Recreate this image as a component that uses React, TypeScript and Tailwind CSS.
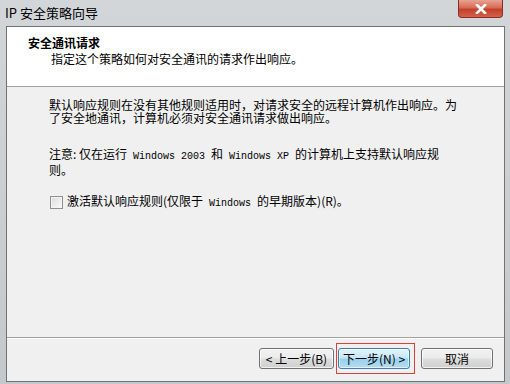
import React from "react";

const cjk = { fontFamily: '"Noto Sans CJK SC", "Noto Sans", sans-serif' };
const mono = "font-['Liberation_Mono',monospace] text-[10px] whitespace-pre";

function Btn({
  children,
  primary,
  className = "",
}: {
  children: React.ReactNode;
  primary?: boolean;
  className?: string;
}) {
  return (
    <div
      className={
        "relative h-[21px] flex items-center justify-center rounded-[3px] border text-[12px] text-black " +
        (primary
          ? "border-[#3c7fb1] bg-[linear-gradient(to_bottom,#e5f4fc_0%,#c4e5f6_48%,#98d1ef_52%,#b6dcf0_100%)] shadow-[inset_0_0_0_1px_rgba(255,255,255,0.6)] "
          : "border-[#707070] bg-[linear-gradient(to_bottom,#f2f2f2_0%,#ebebeb_48%,#dddddd_52%,#cfcfcf_100%)] shadow-[inset_0_0_0_1px_rgba(255,255,255,0.7)] ") +
        className
      }
    >
      {children}
    </div>
  );
}

export default function App() {
  return (
    <div
      className="w-[510px] h-[384px] flex flex-col bg-[linear-gradient(to_bottom,#d3d6d9,#c4c8cb)] overflow-hidden"
      style={cjk}
    >
      {/* Title bar */}
      <div className="h-[26px] flex items-start justify-between">
        <div className="pl-[5px] pt-[4px] text-[13px] leading-[18px] text-black">
          IP 安全策略向导
        </div>
        <div className="mr-[7px] w-[45px] h-[18px] rounded-b-[4px] border border-t-0 border-[#8a2f22] bg-[linear-gradient(to_bottom,#e8a393_0%,#d86a54_45%,#c4402a_55%,#d2624c_100%)] flex items-center justify-center">
          <svg width="12" height="10" viewBox="0 0 12 10">
            <path
              d="M2 1 L10 9 M10 1 L2 9"
              stroke="#ffffff"
              strokeWidth="2.6"
              strokeLinecap="square"
            />
          </svg>
        </div>
      </div>

      {/* Client */}
      <div className="ml-[6px] mr-[5px] mb-[2px] flex-1 flex flex-col border border-[#6e7377] bg-[#f0f0f0]">
        {/* Header */}
        <div className="h-[60px] bg-white border-b border-[#a0a0a0] pl-[21px] pt-[8px]">
          <div className="text-[12px] leading-[16px] font-bold text-black">
            安全通讯请求
          </div>
          <div className="pl-[23px] text-[12px] leading-[16px] text-black">
            指定这个策略如何对安全通讯的请求作出响应。
          </div>
        </div>

        {/* Body */}
        <div className="flex-1 pl-[42px] pt-[11px] text-[12px] leading-[13px] text-black">
          <div>
            <div>默认响应规则在没有其他规则适用时，对请求安全的远程计算机作出响应。为</div>
            <div>了安全地通讯，计算机必须对安全通讯请求做出响应。</div>
          </div>
          <div className="mt-[23px]">
            <div>
              注意: 仅在运行<span className={mono}> Windows 2003 </span>和
              <span className={mono}> Windows XP </span>的计算机上支持默认响应规
            </div>
            <div>则。</div>
          </div>
          <div className="mt-[18px] flex items-center">
            <div className="ml-[1px] w-[13px] h-[13px] border border-[#8f8f8f] bg-[linear-gradient(135deg,#dcdcdc,#fafafa)] shadow-[inset_0_0_0_1px_#f4f4f4]" />
            <div className="ml-[4px]">
              激活默认响应规则(仅限于<span className={mono}> Windows </span>的早期版本)(R)。
            </div>
          </div>
        </div>

        {/* Footer */}
        <div className="h-[44px] border-t border-[#a0a0a0] shadow-[inset_0_1px_0_#ffffff] flex justify-end items-start pt-[10px] pr-[11px]">
          <Btn className="w-[75px]">&lt; 上一步(B)</Btn>
          <Btn primary className="ml-[4px] w-[72px]">
            下一步(N) &gt;
            <div className="absolute left-[-3px] top-[-6px] w-[79px] h-[31px] border border-[#d9413f] pointer-events-none" />
          </Btn>
          <Btn className="ml-[11px] w-[72px]">取消</Btn>
        </div>
      </div>
    </div>
  );
}
